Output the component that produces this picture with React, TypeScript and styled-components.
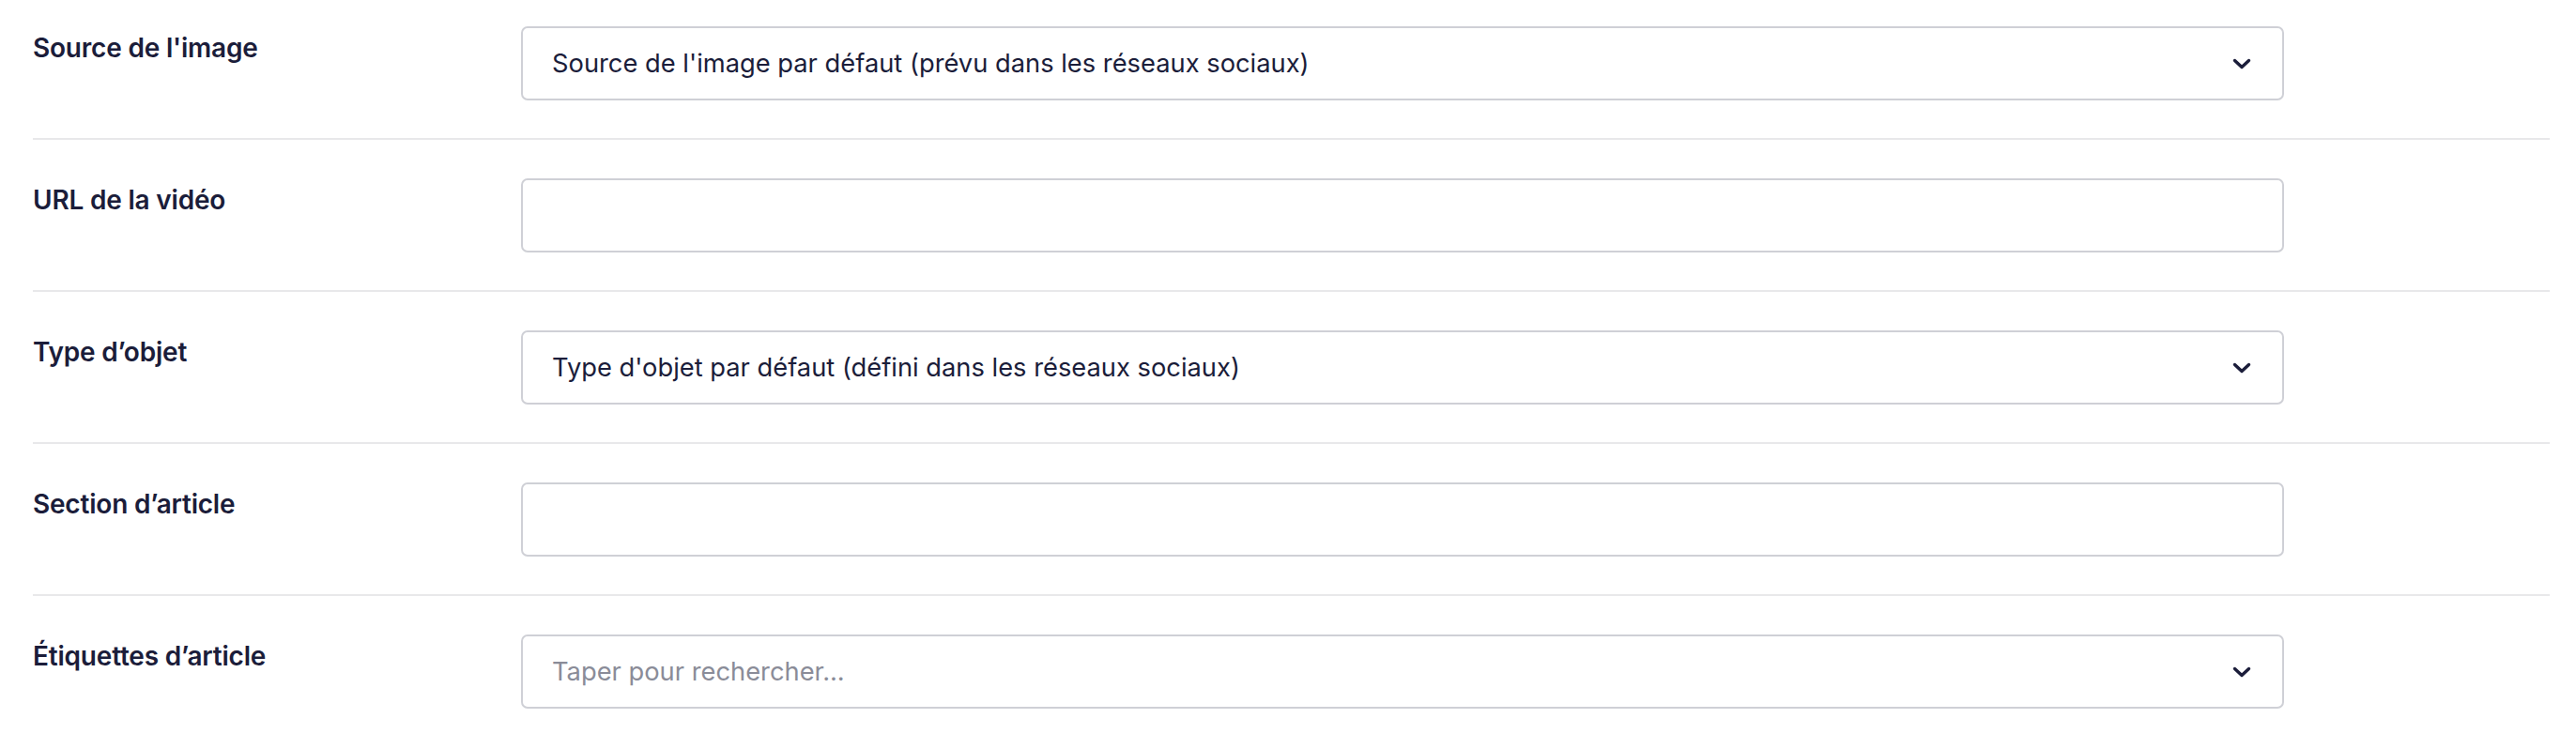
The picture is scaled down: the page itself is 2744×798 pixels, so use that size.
import * as React from "react";
import styled, { createGlobalStyle } from "styled-components";

type Field = {
  label: string;
  kind: "select" | "text" | "search";
  value?: string;
};

const fields: Field[] = [
  {
    label: "Source de l'image",
    kind: "select",
    value: "Source de l'image par défaut (prévu dans les réseaux sociaux)",
  },
  { label: "URL de la vidéo", kind: "text" },
  {
    label: "Type d’objet",
    kind: "select",
    value: "Type d'objet par défaut (défini dans les réseaux sociaux)",
  },
  { label: "Section d’article", kind: "text" },
  { label: "Étiquettes d’article", kind: "search", value: "Taper pour rechercher..." },
];

function Chevron(): JSX.Element {
  return (
    <ChevronIcon viewBox="0 0 20 12" aria-hidden="true">
      <path
        d="M2.5 2.5L10 9.5L17.5 2.5"
        fill="none"
        stroke="currentColor"
        strokeWidth="3.4"
        strokeLinecap="round"
        strokeLinejoin="round"
      />
    </ChevronIcon>
  );
}

function App(): JSX.Element {
  return (
    <>
      <GlobalStyle />
      <Form>
        {fields.map((field) => (
          <Row key={field.label}>
            <Label>{field.label}</Label>
            <Control>
              {field.kind !== "text" && (
                <ControlText placeholder={field.kind === "search"}>
                  {field.value}
                </ControlText>
              )}
              {field.kind !== "text" && <Chevron />}
            </Control>
          </Row>
        ))}
      </Form>
    </>
  );
}

const GlobalStyle = createGlobalStyle`
  html, body {
    margin: 0;
    padding: 0;
    background: #ffffff;
  }
  body {
    font-family: Inter, "Noto Sans", "Liberation Sans", sans-serif;
    color: #1b1d3a;
    -webkit-font-smoothing: antialiased;
  }
`;

const Form = styled.div`
  display: flex;
  flex-direction: column;
  padding: 0 28px 0 35px;
`;

const Row = styled.div`
  display: grid;
  grid-template-columns: 520px 1878px;
  align-items: start;
  padding: 41px 0 40px;
  border-bottom: 2px solid #e8e8ea;

  &:first-child {
    padding-top: 28px;
  }

  &:last-child {
    border-bottom: none;
  }
`;

const Label = styled.div`
  padding-top: 5px;
  font-size: 28px;
  line-height: 36px;
  font-weight: 600;
  color: #1b1d3a;
  letter-spacing: -0.2px;
`;

const Control = styled.div`
  box-sizing: border-box;
  height: 79px;
  display: flex;
  align-items: center;
  justify-content: space-between;
  padding: 0 33px 0 31px;
  border: 2px solid #cfd0d6;
  border-radius: 7px;
  background: #ffffff;
`;

const ControlText = styled.span<{ placeholder?: boolean }>`
  font-size: 27.3px;
  line-height: 36px;
  font-weight: 400;
  color: ${(p) => (p.placeholder ? "#8a8c98" : "#1b1d3a")};
`;

const ChevronIcon = styled.svg`
  width: 20px;
  height: 12px;
  margin-left: auto;
  color: #1b1d3a;
`;

export default App;
